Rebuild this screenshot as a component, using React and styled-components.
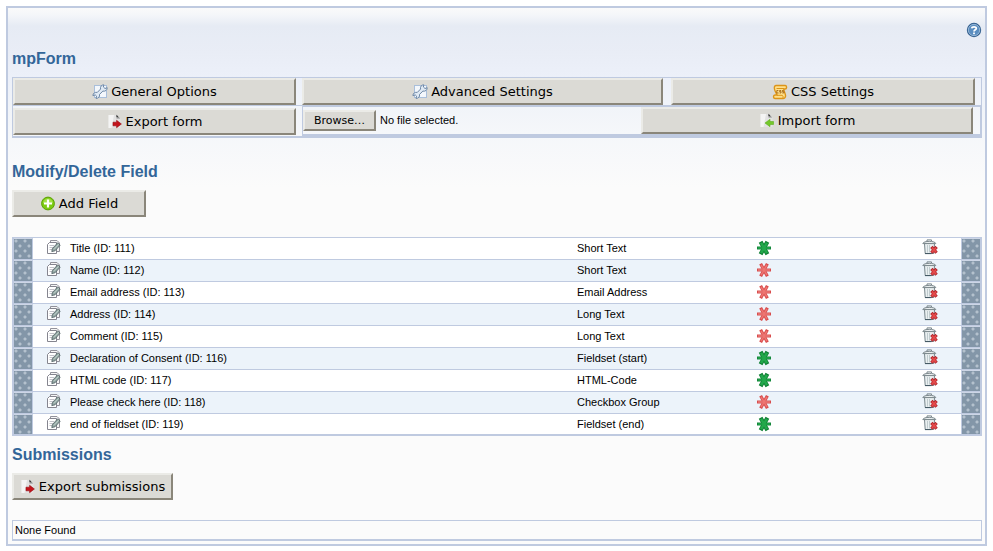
import React from "react";
import styled, { createGlobalStyle } from "styled-components";

const LINE = "#bfcae0";

const GlobalStyle = createGlobalStyle`
  * { box-sizing: border-box; }
  body {
    margin: 6px;
    background: #fff;
    color: #000;
    font: 11px/14px "Liberation Sans", Arial, sans-serif;
  }
`;

const Panel = styled.main`
  padding: 0 3px 3px 4px;
  border: 2px solid ${LINE};
  background: #fbfbfb linear-gradient(#fafafa 0, #f4f6f9 7px, #e6ebf4 18px, #e9edf6 45px, #ecf0f9 70px, #f1f4f9 100px, #f5f7fa 125px, #fbfbfb 180px) no-repeat;
`;

const HelpBar = styled.div`
  display: flex;
  justify-content: flex-end;
  padding: 14px 0 10px;
`;

const HelpLink = styled.a`
  display: block;
  height: 16px;
`;

const Heading = styled.h2`
  margin: 0;
  color: #336699;
  font-size: 16px;
  line-height: 22px;
`;

const SectionHeading = styled(Heading)`
  padding-top: ${(p) => p.$space}px;
  margin-bottom: 7px;
`;

const Actions = styled.div`
  margin-top: 7px;
  border: 1px solid ${LINE};
  border-bottom-width: 2px;
`;

const ActionRow = styled.div`
  display: grid;
  grid-template-columns: ${(p) => p.$columns};
  & + & { border-top: 1px solid ${LINE}; }
`;

const Cell = styled.div`
  display: flex;
  padding: ${(p) => (p.$top ? "2px" : "0")} ${(p) => p.$right}px 0 0;
`;

const Button = styled.button`
  display: inline-flex;
  align-items: center;
  justify-content: center;
  gap: 3px;
  width: ${(p) => p.$width || "100%"};
  height: 27px;
  margin: 0;
  padding: 0;
  border: 2px solid;
  border-color: #ebebe7 #8a867a #8a867a #ebebe7;
  background: #dbdad5;
  color: #000;
  font: 13px/16px "DejaVu Sans", sans-serif;
  svg { flex: none; }
`;

const ImportBox = styled.form`
  display: grid;
  grid-template-columns: 338fr 339fr;
  border: 1px solid ${LINE};
  border-bottom-width: 2px;
`;

const FileField = styled.label`
  display: flex;
  align-items: center;
  gap: 4px;
  padding-bottom: 1px;
`;

const FileInput = styled.input`
  position: absolute;
  width: 1px;
  height: 1px;
  opacity: 0;
`;

const Browse = styled.span`
  width: 73px;
  height: 21px;
  border: 2px solid;
  border-color: #ebebe7 #8a867a #8a867a #ebebe7;
  background: #dbdad5;
  font: 11px/17px "DejaVu Sans", sans-serif;
  text-align: center;
`;

const FieldTable = styled.table`
  width: 100%;
  margin-top: 20px;
  table-layout: fixed;
  border: 2px solid ${LINE};
  border-top-width: 1px;
  border-collapse: separate;
  border-spacing: 0;
`;

const Col = styled.col`
  width: ${(p) => p.$width};
`;

const FieldRow = styled.tr`
  background: #fff;
  &:nth-child(even) { background: #ecf3fa; }
`;

const Data = styled.td`
  height: ${(p) => (p.$last ? 20 : 22)}px;
  padding: 0 0 1px;
  border-bottom: ${(p) => (p.$last ? 0 : 1)}px solid ${LINE};
  svg { display: block; }
`;

const IconData = styled(Data)`
  padding: ${(p) => p.$top}px 0 0 ${(p) => p.$left}px;
  vertical-align: top;
`;

const Handle = styled(Data)`
  border-top: 1px solid #cdd6e6;
  border-${(p) => p.$side}: 1px solid ${LINE};
  background-color: #8396a8;
  background-image:
    radial-gradient(circle at 2px 2px, #b4c1cd 1px, transparent 2px),
    radial-gradient(circle at 6px 7px, #b4c1cd 1px, transparent 2px);
  background-size: 9px 10px;
  cursor: move;
`;

const Results = styled.div`
  margin-top: 20px;
  padding: 2px;
  border: 1px solid ${LINE};
  border-bottom-width: 2px;
`;

const HelpIcon = () => (
  <svg width="16" height="16" viewBox="0 0 16 16">
    <circle cx="8" cy="8" r="7.2" fill="#34608f" />
    <circle cx="8" cy="8" r="5.7" fill="#5a8dc0" stroke="#a9c6e2" strokeWidth="0.8" />
    <path d="M5.7 6.4C5.9 4.3 10.3 4.2 10.3 6.4C10.3 7.8 8 7.8 8 9.6" fill="none" stroke="#fff" strokeWidth="1.8" />
    <rect x="7.1" y="10.5" width="1.8" height="1.7" fill="#fff" />
  </svg>
);

const WrenchIcon = () => (
  <svg width="16" height="16" viewBox="0 0 16 16">
    <rect x="2.5" y="1.5" width="12" height="12" fill="#f3f7fc" stroke="#a9bfdb" />
    <path
      d="M11.8 0.8C9.4 0.8 8 2.8 8.6 5L5.3 8.4C3.1 7.8 0.9 9.4 0.9 11.6L3.2 10.9L4.6 12.2L4 14.4C6.4 14.6 8.1 12.6 7.5 10.4L10.9 7.1C13.2 7.7 15.3 6.1 15.2 3.7L13 4.5L11.4 3Z"
      fill="#dfe9f4"
      stroke="#6d87a5"
      strokeWidth="1"
      strokeLinejoin="round"
    />
  </svg>
);

const ScrollIcon = () => (
  <svg width="16" height="16" viewBox="0 0 16 16">
    <path d="M4 1.5H13.2C15.2 1.8 15 5 13 5H11.8C11.8 8 13.6 9.5 13.6 12C13.4 13.8 12.5 14.5 11 14.5H3C1 14.2 1 11.2 3 11H5C4.6 9 3 8 2.6 5.5C2 3 2.4 1.8 4 1.5Z" fill="#ffe08a" stroke="#dc9418" strokeWidth="1.4" />
    <path d="M4.5 4.5H12M5 11.3H10.3C11.5 12 11 13.5 10.8 14" fill="none" stroke="#dc9418" />
    <path d="M6.4 6.5H4.8V9H6.6M9 6.5H7.6V7.7H9V9H7.6M11.6 6.5H10.2V7.7H11.8V9H10.3" fill="none" stroke="#9b5a0a" strokeWidth="0.8" />
  </svg>
);

const PageArrowIcon = ({ back }) => (
  <svg width="16" height="16" viewBox="0 0 16 16">
    <path d="M1.5 1H10L13.5 4.5V14H1.5Z" fill="#e2e2e2" />
    <path d="M1.5 1H7L4.5 14H1.5Z" fill="#f4f4f4" />
    <path d="M9.5 0.8V4.5H13.2Z" fill="#8c8c8c" />
    <path d="M9.5 0.8V3H11.4Z" fill="#333" />
    {back ? (
      <path d="M14.5 8.5H11V6.3L6 10L11 13.7V11.5H14.5Z" fill="#74c82a" stroke="#5fae20" strokeWidth="0.6" />
    ) : (
      <path d="M6 8.2H9.6V6.3L14.4 10L9.6 13.7V11.8H6Z" fill="#c4141c" stroke="#970c12" strokeWidth="0.6" />
    )}
  </svg>
);

const AddIcon = () => (
  <svg width="16" height="16" viewBox="0 0 16 16">
    <circle cx="8" cy="7.5" r="6.4" fill="#7ccb12" stroke="#5aa005" />
    <path d="M3 7C3.5 1 12.5 1 13 7C10 8.4 6 8.4 3 7Z" fill="#a2df45" />
    <path d="M8 3.5V11.5M4 7.5H12" stroke="#fff" strokeWidth="2.2" />
  </svg>
);

const EditIcon = () => (
  <svg width="16" height="16" viewBox="0 0 16 16">
    <path d="M4.5 1.5H11L13.5 4V12.5H4.5Z" fill="#f6f6f6" stroke="#92929b" />
    <path d="M1.5 5.5L3.5 3.5H10.5V14.5H1.5Z" fill="#fff" stroke="#85858f" />
    <path d="M3.5 6.5H8M3.5 8.5H7M3.5 10.5H6" stroke="#c2c2c9" />
    <path d="M5.8 12.6L6.4 9.6L11.6 3.9L14.2 6.1L9 11.8Z" fill="#93a8a4" stroke="#57666a" strokeWidth="0.9" />
    <path d="M8 10.3L12.8 5.2" stroke="#c9d6d2" strokeWidth="0.8" />
  </svg>
);

const StarIcon = ({ on }) => (
  <svg width="16" height="16" viewBox="0 0 16 16">
    <path d="M1 8H15" stroke={on ? "#12873a" : "#d84c4c"} strokeWidth="3" />
    <path d="M4.6 1.8L11.4 14.2M11.4 1.8L4.6 14.2" stroke={on ? "#0f7f33" : "#d84c4c"} strokeWidth={on ? 4.2 : 3.2} />
    <path d="M2 8H14" stroke={on ? "#25ad50" : "#ee8683"} strokeWidth="1.2" />
    <path d="M5.1 2.8L10.9 13.2M10.9 2.8L5.1 13.2" stroke={on ? "#22a84b" : "#ee7672"} strokeWidth={on ? 2.6 : 1.5} />
  </svg>
);

const TrashIcon = () => (
  <svg width="16" height="16" viewBox="0 0 16 16">
    <path d="M2.5 4.5H12.5L11.8 14.5H3.2Z" fill="#eaf0f1" stroke="#77858b" />
    <path d="M3 14.6H9.5" stroke="#3f5560" />
    <path d="M5.5 6V13.5M7.5 6V13.5" stroke="#c0cbce" />
    <path d="M0.8 4.6C1.2 1.6 13.4 1.6 13.8 4.6Z" fill="#e8edee" stroke="#7b878c" />
    <path d="M5 2V0.9H9.5V2" fill="none" stroke="#7b878c" />
    <path d="M9.4 7.9L14.6 13.7M14.6 7.9L9.4 13.7" stroke="#b3262b" strokeWidth="3.2" />
    <path d="M9.9 8.6L14.1 13.1M14.1 8.6L9.9 13.1" stroke="#e64b4c" strokeWidth="1.6" />
  </svg>
);

const fields = [
  ["Title (ID: 111)", "Short Text", true],
  ["Name (ID: 112)", "Short Text", false],
  ["Email address (ID: 113)", "Email Address", false],
  ["Address (ID: 114)", "Long Text", false],
  ["Comment (ID: 115)", "Long Text", false],
  ["Declaration of Consent (ID: 116)", "Fieldset (start)", true],
  ["HTML code (ID: 117)", "HTML-Code", true],
  ["Please check here (ID: 118)", "Checkbox Group", false],
  ["end of fieldset (ID: 119)", "Fieldset (end)", true],
];

export default function App() {
  return (
    <>
      <GlobalStyle />
      <Panel>
        <HelpBar>
          <HelpLink href="#help" aria-label="Help"><HelpIcon /></HelpLink>
        </HelpBar>
        <Heading>mpForm</Heading>
        <Actions>
          <ActionRow $columns="289fr 369fr 310fr">
            <Cell $right={6}><Button><WrenchIcon />General Options</Button></Cell>
            <Cell $right={8}><Button><WrenchIcon />Advanced Settings</Button></Cell>
            <Cell $right={6}><Button><ScrollIcon />CSS Settings</Button></Cell>
          </ActionRow>
          <ActionRow $columns="289fr 679fr">
            <Cell $right={6} $top><Button><PageArrowIcon />Export form</Button></Cell>
            <ImportBox>
              <FileField>
                <FileInput type="file" />
                <Browse>Browse…</Browse>
                <span>No file selected.</span>
              </FileField>
              <Cell $right={7}><Button type="button"><PageArrowIcon back />Import form</Button></Cell>
            </ImportBox>
          </ActionRow>
        </Actions>

        <SectionHeading $space={23}>Modify/Delete Field</SectionHeading>
        <Cell $right={0}><Button $width="134px"><AddIcon />Add Field</Button></Cell>
        <FieldTable>
          <colgroup>
            <Col $width="19px" />
            <Col $width="37px" />
            <Col />
            <Col $width="18.5%" />
            <Col $width="16.7%" />
            <Col $width="44px" />
            <Col $width="19px" />
          </colgroup>
          <tbody>
            {fields.map(([name, type, on], i) => {
              const last = i === fields.length - 1;
              return (
                <FieldRow key={name}>
                  <Handle $last={last} $side="right" />
                  <IconData $last={last} $left={13} $top={1}><EditIcon /></IconData>
                  <Data $last={last}>{name}</Data>
                  <Data $last={last}>{type}</Data>
                  <IconData $last={last} $left={0} $top={2}><StarIcon on={on} /></IconData>
                  <IconData $last={last} $left={5} $top={1}><TrashIcon /></IconData>
                  <Handle $last={last} $side="left" />
                </FieldRow>
              );
            })}
          </tbody>
        </FieldTable>

        <SectionHeading $space={8}>Submissions</SectionHeading>
        <Cell $right={0}><Button $width="161px"><PageArrowIcon />Export submissions</Button></Cell>
        <Results>None Found</Results>
      </Panel>
    </>
  );
}
